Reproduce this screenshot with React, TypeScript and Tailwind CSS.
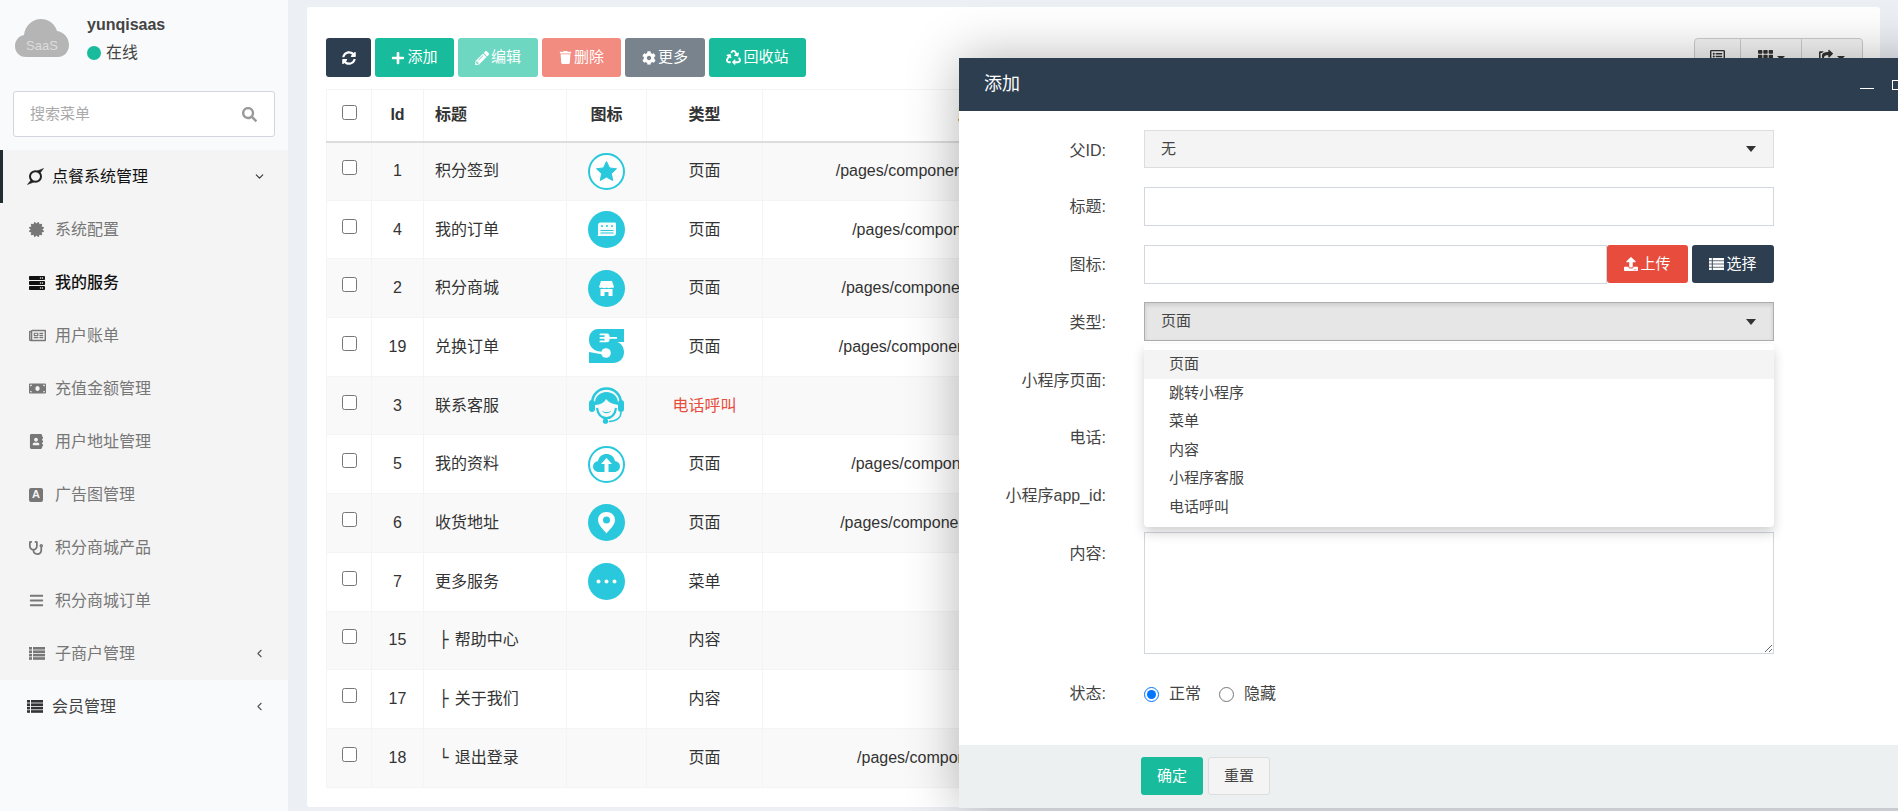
import React from "react";
import { ChevronDown, ChevronLeft } from "lucide-react";
import {
  FaSyncAlt,
  FaPlus,
  FaPencilAlt,
  FaTrash,
  FaCog,
  FaRecycle,
  FaSearch,
  FaCertificate,
  FaServer,
  FaRegNewspaper,
  FaMoneyBill,
  FaAddressBook,
  FaStethoscope,
  FaBars,
  FaUpload,
  FaRegListAlt,
  FaTh,
  FaShareSquare,
} from "react-icons/fa";

const CYAN = "#29c8dc";

function CloudLogo() {
  return (
    <svg width="54" height="39" viewBox="0 0 54 39">
      <path
        d="M11 38C4 38 0 33 0 27c0-6 4-10 9-11C10 7 17 0 26 0c8 0 14 5 16 12 7 1 12 7 12 14 0 7-5 12-11 12H11z"
        fill="#b5b5b5"
      />
      <text x="27" y="31" textAnchor="middle" fontSize="13" fill="#dcdcdc" fontFamily="Liberation Sans">
        SaaS
      </text>
    </svg>
  );
}

function RingIcon() {
  return (
    <svg width="17" height="17" viewBox="0 0 17 17" fill="none" stroke="#222">
      <ellipse cx="8.5" cy="8.5" rx="5.5" ry="5.2" strokeWidth="2" />
      <path d="M10 3 L16.5 0.5 L13 5 Z" fill="#222" strokeWidth="0.5" />
      <path d="M7 14 L0.5 16.5 L4 12 Z" fill="#222" strokeWidth="0.5" />
    </svg>
  );
}

function ListIcon({ size = 16 }: { size?: number }) {
  return (
    <svg width={size} height={(size * 13) / 16} viewBox="0 0 16 13" fill="currentColor">
      {[0, 3.4, 6.8, 10.2].map((y) => (
        <g key={y}>
          <rect x="0" y={y} width="3" height="2.6" />
          <rect x="4" y={y} width="12" height="2.6" />
        </g>
      ))}
    </svg>
  );
}

function AdIcon() {
  return (
    <span className="flex h-[14px] w-[14px] items-center justify-center rounded-[2px] bg-[#777] text-[11px] font-bold leading-none text-[#f4f4f4]">
      A
    </span>
  );
}

function Disc({ children }: { children?: React.ReactNode }) {
  return (
    <svg width="37" height="37" viewBox="0 0 37 37" className="mx-auto block">
      <circle cx="18.5" cy="18.5" r="18.5" fill={CYAN} />
      {children}
    </svg>
  );
}

function StarIcon() {
  return (
    <svg width="37" height="37" viewBox="0 0 37 37" className="mx-auto block">
      <circle cx="18.5" cy="18.5" r="17.5" fill="#fff" stroke={CYAN} strokeWidth="2" />
      <path
        d="M18.5 8.5l3 6.4 7 .9-5.1 4.8 1.3 6.9-6.2-3.4-6.2 3.4 1.3-6.9-5.1-4.8 7-.9z"
        fill={CYAN}
        stroke={CYAN}
        strokeLinejoin="round"
      />
    </svg>
  );
}

function ChatIcon() {
  return (
    <Disc>
      <path d="M10 14q0-2.5 2.5-2.5H27q1 0 1 1.500V22q0 3-3 3H9.500q1-1 .5-3z" fill="#fff" opacity="0.95" />
      <circle cx="14" cy="15" r="1" fill={CYAN} />
      <circle cx="19" cy="15" r="1" fill={CYAN} />
      <circle cx="24" cy="15" r="1" fill={CYAN} />
      <rect x="12.500" y="19" width="13" height="1" fill={CYAN} />
      <rect x="12.500" y="21.500" width="13" height="1" fill={CYAN} />
    </Disc>
  );
}

function StoreIcon() {
  return (
    <Disc>
      <path d="M13 11h11l2 6q-1.300 1.500-3 .5-2 1.500-4.500 0-2.500 1.500-4.500 0-1.700 1-3-.5z" fill="#fff" />
      <path d="M12.500 19h4v0h4v0h4V26h-4v-4h-4v4h-4z" fill="#fff" />
    </Disc>
  );
}

function SpoonLogo() {
  return (
    <svg width="35" height="35" viewBox="0 0 35 35" className="mx-auto block">
      <path
        d="M9 0H35V13H28C32 14 35 18 35 23C35 30 30 34 24 34H0V22H8C3 20 0 16 0 11C0 4 4 0 9 0z"
        fill={CYAN}
      />
      <g fill="#fff">
        <rect x="10.500" y="4.500" width="7" height="1.800" rx="0.900" />
        <rect x="10.500" y="8" width="7" height="1.800" rx="0.900" />
        <rect x="10.500" y="11.500" width="7" height="1.800" rx="0.900" />
        <rect x="15.500" y="4.500" width="5" height="8.800" rx="3" />
        <rect x="19" y="8" width="9" height="1.800" />
        <circle cx="17" cy="24" r="4.800" />
        <path d="M0 20.800l14 2.200v2.400L0 23z" />
      </g>
    </svg>
  );
}

function AgentIcon() {
  return (
    <svg width="37" height="37" viewBox="0 0 37 37" className="mx-auto block">
      <path d="M4 17C4 7 11 1.500 18.500 1.500S33 7 33 17" fill="none" stroke={CYAN} strokeWidth="2.500" />
      <rect x="1" y="13" width="6" height="12" rx="3" fill={CYAN} />
      <rect x="30" y="13" width="6" height="12" rx="3" fill={CYAN} />
      <path d="M7 18C6 10 12 5 18.500 5S31 10 30 18c-4-1-9-2-12-6-1 3-6 6-11 6z" fill={CYAN} />
      <path d="M9 21c1 7 5 10 9.500 10s8.500-3 9.500-10" fill="none" stroke={CYAN} strokeWidth="2.200" />
      <path d="M14 23.500c2 2 7 2 9 0-1 3.500-8 3.500-9 0z" fill={CYAN} />
      <path d="M33 25c0 6-5 9-12 9.500" fill="none" stroke={CYAN} strokeWidth="1.500" />
      <circle cx="17.500" cy="34.200" r="2.600" fill={CYAN} />
    </svg>
  );
}

function CloudUpIcon() {
  return (
    <svg width="37" height="37" viewBox="0 0 37 37" className="mx-auto block">
      <circle cx="18.500" cy="18.500" r="17.500" fill="#fff" stroke={CYAN} strokeWidth="2" />
      <path
        d="M11 26c-3.500 0-6-2.500-6-5.500S7 15.500 10 15c1-4.500 4.500-7 8.500-7s7.500 2.500 8.500 7c3 .5 5 2.500 5 5.500S29.500 26 26 26z"
        fill={CYAN}
      />
      <path d="M18.500 12l5.500 6h-3.500v12h-4V18H13z" fill="#fff" />
    </svg>
  );
}

function PinIcon() {
  return (
    <Disc>
      <path d="M18.500 8c-5 0-8.500 3.500-8.500 8 0 5 5 9 8.500 13.500C22 25 27 21 27 16c0-4.500-3.500-8-8.500-8z" fill="#fff" />
      <circle cx="18.500" cy="16" r="3.500" fill={CYAN} />
    </Disc>
  );
}

function DotsIcon() {
  return (
    <Disc>
      <circle cx="10.500" cy="18.500" r="2" fill="#fff" />
      <circle cx="18.500" cy="18.500" r="2" fill="#fff" />
      <circle cx="26.500" cy="18.500" r="2" fill="#fff" />
    </Disc>
  );
}

type Row = { id: number; title: string; tree?: string; icon?: React.ReactNode; type: string; path: string };

const rows: Row[] = [
  { id: 1, title: "积分签到", icon: <StarIcon />, type: "页面", path: "/pages/component/integral/signin/signs" },
  { id: 4, title: "我的订单", icon: <ChatIcon />, type: "页面", path: "/pages/component/order/order/allx" },
  { id: 2, title: "积分商城", icon: <StoreIcon />, type: "页面", path: "/pages/component/integral/mall/index" },
  { id: 19, title: "兑换订单", icon: <SpoonLogo />, type: "页面", path: "/pages/component/integral/exchange/l" },
  { id: 3, title: "联系客服", icon: <AgentIcon />, type: "电话呼叫", path: "" },
  { id: 5, title: "我的资料", icon: <CloudUpIcon />, type: "页面", path: "/pages/component/user/user/index" },
  { id: 6, title: "收货地址", icon: <PinIcon />, type: "页面", path: "/pages/component/address/list/indexs" },
  { id: 7, title: "更多服务", icon: <DotsIcon />, type: "菜单", path: "" },
  { id: 15, title: "帮助中心", tree: "├", type: "内容", path: "" },
  { id: 17, title: "关于我们", tree: "├", type: "内容", path: "" },
  { id: 18, title: "退出登录", tree: "└", type: "页面", path: "/pages/component/login/signouts" },
];

const subMenu = [
  { label: "系统配置", icon: <FaCertificate size={15} /> },
  { label: "我的服务", icon: <FaServer size={16} />, active: true },
  { label: "用户账单", icon: <FaRegNewspaper size={17} /> },
  { label: "充值金额管理", icon: <FaMoneyBill size={17} /> },
  { label: "用户地址管理", icon: <FaAddressBook size={15} /> },
  { label: "广告图管理", icon: <AdIcon /> },
  { label: "积分商城产品", icon: <FaStethoscope size={14} /> },
  { label: "积分商城订单", icon: <FaBars size={15} /> },
  { label: "子商户管理", icon: <ListIcon />, more: true },
];

const options = ["页面", "跳转小程序", "菜单", "内容", "小程序客服", "电话呼叫"];

function Sidebar() {
  return (
    <aside className="h-full w-[288px] shrink-0 bg-[#f9fafc]">
      <div className="h-[150px] pl-[13px] pr-[13px]">
        <div className="flex h-[91px] pt-[19px]">
          <div className="ml-[2px] w-[72px]">
            <CloudLogo />
          </div>
          <div>
            <div className="text-[16px] font-bold leading-[12px] text-[#444]">yunqisaas</div>
            <div className="mt-[11px] flex items-center text-[16px] leading-[22px] text-[#444]">
              <span className="mr-[5px] h-[14px] w-[14px] rounded-full bg-[#18bc9c]" />
              在线
            </div>
          </div>
        </div>
        <div className="flex h-[46px] items-center justify-between rounded-[3px] border border-[#d2d6de] bg-white pl-[16px] pr-[17px] text-[15px] text-[#aaa]">
          <span>搜索菜单</span>
          <FaSearch size={15} className="text-[#999]" />
        </div>
      </div>
      <div className="bg-[#f4f4f4]">
        <div className="flex h-[53px] items-center border-l-[3px] border-[#222d32] pl-[24px] pr-[22px] text-[16px] text-[#111]">
          <span className="w-[25px]">
            <RingIcon />
          </span>
          <span className="flex-1">点餐系统管理</span>
          <ChevronDown size={13} className="text-[#333]" />
        </div>
        {subMenu.map((m) => (
          <div
            key={m.label}
            className={`flex h-[53px] items-center pl-[29px] pr-[22px] text-[16px] ${
              m.active ? "font-medium text-[#111]" : "text-[#777]"
            }`}
          >
            <span className="flex w-[26px] items-center">{m.icon}</span>
            <span className="flex-1">{m.label}</span>
            {m.more && <ChevronLeft size={13} className="text-[#555]" />}
          </div>
        ))}
      </div>
      <div className="flex h-[53px] items-center pl-[27px] pr-[22px] text-[16px] text-[#444]">
        <span className="mr-[9px] text-[#333]">
          <ListIcon />
        </span>
        <span className="flex-1">会员管理</span>
        <ChevronLeft size={13} className="text-[#555]" />
      </div>
    </aside>
  );
}

function SmallCaret() {
  return <span className="mt-[7px] h-0 w-0 border-x-[4px] border-t-[4px] border-x-transparent border-t-[#333]" />;
}

function Toolbar() {
  const btn = "flex h-[39px] items-center justify-center gap-[2px] rounded-[3px] text-[15px] text-white";
  return (
    <div className="flex h-[39px] items-start justify-between">
      <div className="flex gap-[4px]">
        <button className={`${btn} w-[45px] bg-[#2c3e50]`}>
          <FaSyncAlt size={14} />
        </button>
        <button className={`${btn} w-[79px] bg-[#18bc9c]`}>
          <FaPlus size={14} />
          添加
        </button>
        <button className={`${btn} w-[80px] bg-[#6dd7c2]`}>
          <FaPencilAlt size={14} />
          编辑
        </button>
        <button className={`${btn} w-[79px] bg-[#f28b80]`}>
          <FaTrash size={13} />
          删除
        </button>
        <button className={`${btn} w-[80px] bg-[#78838e]`}>
          <FaCog size={14} />
          更多
        </button>
        <button className={`${btn} w-[97px] bg-[#18bc9c]`}>
          <FaRecycle size={15} />
          回收站
        </button>
      </div>
      <div className="-mr-[2px] flex h-[39px] w-[169px] overflow-hidden rounded-[4px] border border-[#ccc] bg-[#f4f4f4] text-[#333]">
        <span className="flex w-[46px] justify-center border-r border-[#ccc] pt-[10px]">
          <FaRegListAlt size={15} />
        </span>
        <span className="flex w-[61px] justify-center gap-[4px] border-r border-[#ccc] pt-[10px]">
          <FaTh size={15} />
          <SmallCaret />
        </span>
        <span className="flex flex-1 justify-center gap-[4px] pt-[10px]">
          <FaShareSquare size={14} />
          <SmallCaret />
        </span>
      </div>
    </div>
  );
}

function DataTable() {
  const cell = "border border-[#f4f4f4] px-[11px] text-center align-middle";
  return (
    <table className="mt-[12px] w-[1535px] table-fixed border-collapse text-[16px] text-[#333]">
      <colgroup>
        <col className="w-[45px]" />
        <col className="w-[52px]" />
        <col className="w-[143px]" />
        <col className="w-[80px]" />
        <col className="w-[116px]" />
        <col className="w-[423px]" />
        <col />
      </colgroup>
      <thead>
        <tr className="h-[52px] font-bold">
          <th className={`${cell} border-b-[2px] border-b-[#ddd]`}>
            <input type="checkbox" readOnly className="mx-auto mb-[5px] block h-[15px] w-[15px]" />
          </th>
          <th className={`${cell} border-b-[2px] border-b-[#ddd]`}>Id</th>
          <th className={`${cell} border-b-[2px] border-b-[#ddd] text-left`}>标题</th>
          <th className={`${cell} border-b-[2px] border-b-[#ddd]`}>图标</th>
          <th className={`${cell} border-b-[2px] border-b-[#ddd]`}>类型</th>
          <th className={`${cell} border-b-[2px] border-b-[#ddd]`}>路径</th>
          <th className={`${cell} border-b-[2px] border-b-[#ddd]`}>状态</th>
        </tr>
      </thead>
      <tbody>
        {rows.map((r, i) => (
          <tr key={r.id} className={`h-[58.7px] ${i % 2 === 0 ? "bg-[#f9f9f9]" : "bg-white"}`}>
            <td className={cell}>
              <input type="checkbox" readOnly className="mx-auto mb-[7px] block h-[15px] w-[15px]" />
            </td>
            <td className={cell}>{r.id}</td>
            <td className={`${cell} text-left`}>
              {r.tree && (
                <span className="ml-[4px] mr-[6px] font-['DejaVu_Sans',sans-serif]">{r.tree}</span>
              )}
              {r.title}
            </td>
            <td className={`${cell} !px-0`}>{r.icon}</td>
            <td className={`${cell} ${r.type === "电话呼叫" ? "text-[#e74c3c]" : ""}`}>{r.type}</td>
            <td className={cell}>{r.path}</td>
            <td className={cell}>正常</td>
          </tr>
        ))}
      </tbody>
    </table>
  );
}

function FormRow({
  label,
  h,
  mb = "mb-[19px]",
  pt = "pt-[8px]",
  children,
}: {
  label: string;
  h: string;
  mb?: string;
  pt?: string;
  children?: React.ReactNode;
}) {
  return (
    <div className={`flex items-start ${h} ${mb}`}>
      <label className={`w-[147px] shrink-0 whitespace-nowrap text-right text-[16px] leading-[24px] text-[#444] ${pt}`}>
        {label}:
      </label>
      <div className="ml-[38px] w-[630px]">{children}</div>
    </div>
  );
}

function Caret() {
  return <span className="h-0 w-0 border-x-[5px] border-t-[6px] border-x-transparent border-t-[#333]" />;
}

function Modal() {
  const input = "block w-full border border-[#d2d6de] bg-white";
  return (
    <div className="absolute left-[959px] top-[58px] flex h-[750px] w-[1000px] flex-col bg-white shadow-[1px_1px_50px_rgba(0,0,0,0.3)]">
      <div className="flex h-[53px] shrink-0 items-center justify-between bg-[#2c3e50] pl-[25px] text-[18px] text-white">
        添加
        <div className="mr-[55px] flex items-center gap-[18px]">
          <span className="mt-[7px] h-[1px] w-[14px] bg-white" />
          <span className="h-[10px] w-[12px] border border-white" />
        </div>
      </div>
      <div className="flex-1 pt-[19px]">
        <FormRow label="父ID" h="h-[38px]" pt="pt-[9px]">
          <div className="flex h-[38px] items-center justify-between border border-[#ddd] bg-[#f4f4f4] pl-[16px] pr-[17px] text-[15px] text-[#444]">
            <span className="pt-[1px]">无</span>
            <Caret />
          </div>
        </FormRow>
        <FormRow label="标题" h="h-[39px]">
          <input className={`${input} h-[39px]`} />
        </FormRow>
        <FormRow label="图标" h="h-[39px]" mb="mb-[18px]">
          <div className="flex h-[39px]">
            <input className={`${input} h-[39px] !w-[463px]`} />
            <button className="flex h-[38px] w-[81px] items-center justify-center gap-[2px] rounded-[3px] bg-[#e74c3c] text-[15px] text-white">
              <FaUpload size={14} />
              上传
            </button>
            <button className="ml-[4px] flex h-[38px] w-[82px] items-center justify-center gap-[2px] rounded-[3px] bg-[#2c3e50] text-[15px] text-white">
              <ListIcon size={15} />
              选择
            </button>
          </div>
        </FormRow>
        <FormRow label="类型" h="h-[39px]" pt="pt-[9px]">
          <div className="flex h-[39px] items-center justify-between border border-[#adadad] bg-[#e6e6e6] pl-[16px] pr-[17px] text-[15px] text-[#444] shadow-[inset_0_2px_4px_rgba(0,0,0,0.125)]">
            页面
            <Caret />
          </div>
        </FormRow>
        <FormRow label="小程序页面" h="h-[39px]" pt="pt-[9px]">
          <input className={`${input} h-[39px]`} />
        </FormRow>
        <FormRow label="电话" h="h-[39px]">
          <input className={`${input} h-[39px]`} />
        </FormRow>
        <FormRow label="小程序app_id" h="h-[39px]" mb="mb-[17px]">
          <input className={`${input} h-[39px]`} />
        </FormRow>
        <FormRow label="内容" h="h-[122px]" mb="mb-[28px]" pt="pt-[10px]">
          <textarea className={`${input} h-[122px] resize-y`} />
        </FormRow>
        <div className="flex items-center text-[16px] text-[#444]">
          <span className="w-[147px] text-right">状态:</span>
          <input type="radio" name="status" defaultChecked className="ml-[38px] h-[15px] w-[15px] accent-[#0075ff]" />
          <span className="ml-[10px]">正常</span>
          <input type="radio" name="status" className="ml-[18px] h-[15px] w-[15px]" />
          <span className="ml-[10px]">隐藏</span>
        </div>
      </div>
      <div className="flex h-[63px] shrink-0 items-start gap-[5px] bg-[#ecf0f1] pl-[182px] pt-[12px] text-[15px]">
        <button className="h-[38px] w-[62px] rounded-[3px] bg-[#18bc9c] text-white">确定</button>
        <button className="h-[38px] w-[62px] rounded-[3px] border border-[#ddd] bg-[#f4f4f4] text-[#444]">重置</button>
      </div>
      <ul className="absolute left-[185px] top-[286px] z-10 h-[183px] w-[630px] rounded-[4px] bg-white py-[6px] text-[15px] text-[#444] shadow-[0_6px_12px_rgba(0,0,0,0.18)]">
        {options.map((o, i) => (
          <li key={o} className={`flex h-[28.6px] items-center pl-[25px] ${i === 0 ? "bg-[#f4f4f4]" : ""}`}>
            {o}
          </li>
        ))}
      </ul>
    </div>
  );
}

export default function App() {
  return (
    <div className="relative flex h-[811px] w-[1898px] overflow-hidden bg-[#ecf0f5] font-['Liberation_Sans','Noto_Sans_CJK_SC',sans-serif]">
      <Sidebar />
      <main className="flex-1 pb-[4px] pl-[19px] pr-[18px] pt-[7px]">
        <div className="h-[800px] overflow-hidden rounded-[3px] bg-white px-[19px] pt-[31px]">
          <Toolbar />
          <DataTable />
        </div>
      </main>
      <Modal />
    </div>
  );
}
